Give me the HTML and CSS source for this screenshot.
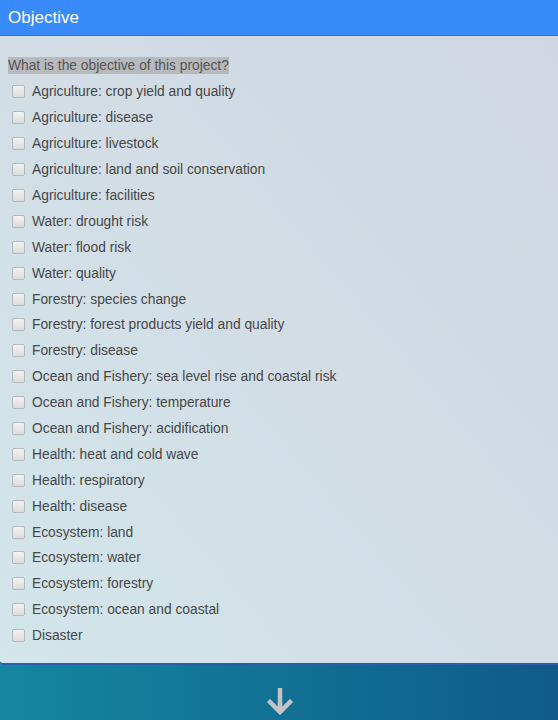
FILE: index.html
```html
<!DOCTYPE html>
<html>
<head>
<meta charset="utf-8">
<link rel="stylesheet" href="styles.css">
</head>
<body>
<div class="panel">
  <div class="panel-header">Objective</div>
  <div class="panel-body">
    <div class="question"><span class="q-text">What is the objective of this project?</span></div>
    <ul class="options">
      <li><span class="box"></span>Agriculture: crop yield and quality</li>
      <li><span class="box"></span>Agriculture: disease</li>
      <li><span class="box"></span>Agriculture: livestock</li>
      <li><span class="box"></span>Agriculture: land and soil conservation</li>
      <li><span class="box"></span>Agriculture: facilities</li>
      <li><span class="box"></span>Water: drought risk</li>
      <li><span class="box"></span>Water: flood risk</li>
      <li><span class="box"></span>Water: quality</li>
      <li><span class="box"></span>Forestry: species change</li>
      <li><span class="box"></span>Forestry: forest products yield and quality</li>
      <li><span class="box"></span>Forestry: disease</li>
      <li><span class="box"></span>Ocean and Fishery: sea level rise and coastal risk</li>
      <li><span class="box"></span>Ocean and Fishery: temperature</li>
      <li><span class="box"></span>Ocean and Fishery: acidification</li>
      <li><span class="box"></span>Health: heat and cold wave</li>
      <li><span class="box"></span>Health: respiratory</li>
      <li><span class="box"></span>Health: disease</li>
      <li><span class="box"></span>Ecosystem: land</li>
      <li><span class="box"></span>Ecosystem: water</li>
      <li><span class="box"></span>Ecosystem: forestry</li>
      <li><span class="box"></span>Ecosystem: ocean and coastal</li>
      <li><span class="box"></span>Disaster</li>
    </ul>
  </div>
</div>
<div class="footer">
  <svg class="arrow" width="30" height="30" viewBox="0 0 30 30">
    <path d="M15 2 V26 M3.5 14.5 L15 26 L26.5 14.5" fill="none" stroke="#c4c4c4" stroke-width="4.5" stroke-linecap="butt" stroke-linejoin="miter"/>
  </svg>
</div>
</body>
</html>
```

FILE: styles.css
```css
html, body {
  margin: 0;
  padding: 0;
}
body {
  font-family: "Liberation Sans", Arial, sans-serif;
  background: linear-gradient(to right, #14879f, #0f5b8a);
  width: 558px;
  height: 720px;
  overflow: hidden;
}
.panel {
  background: linear-gradient(to top right, #d2e6eb 0%, #d2dde6 50%, #d0d6e2 100%);
  border-bottom: 2px solid #2b5eb3;
  border-radius: 0 0 0 4px;
}
.panel-header {
  height: 36px;
  box-sizing: border-box;
  background: #398bfc;
  border-bottom: 1px solid #2e72d6;
  color: #fff;
  font-size: 17px;
  line-height: 35px;
  padding-left: 8px;
}
.panel-body {
  padding: 20px 8px 14px 8px;
}
.question {
  font-size: 13.8px;
  line-height: 20px;
  margin-bottom: 3px;
  color: #555;
}
.q-text {
  background: #b7b9bc;
  padding: 1px 0;
}
.options {
  list-style: none;
  margin: 0;
  padding: 0;
}
.options li {
  display: flex;
  align-items: center;
  height: 25.9px;
  font-size: 13.8px;
  color: #474747;
}
.box {
  width: 11px;
  height: 11px;
  border: 1px solid #b4b8bd;
  border-radius: 2px;
  background: linear-gradient(#f2f2f2, #dcdcdc);
  margin-left: 4px;
  margin-right: 7px;
  flex: none;
}
.footer {
  display: flex;
  justify-content: center;
  padding-top: 21px;
}
.arrow {
  display: block;
  margin-left: 1px;
}
```
